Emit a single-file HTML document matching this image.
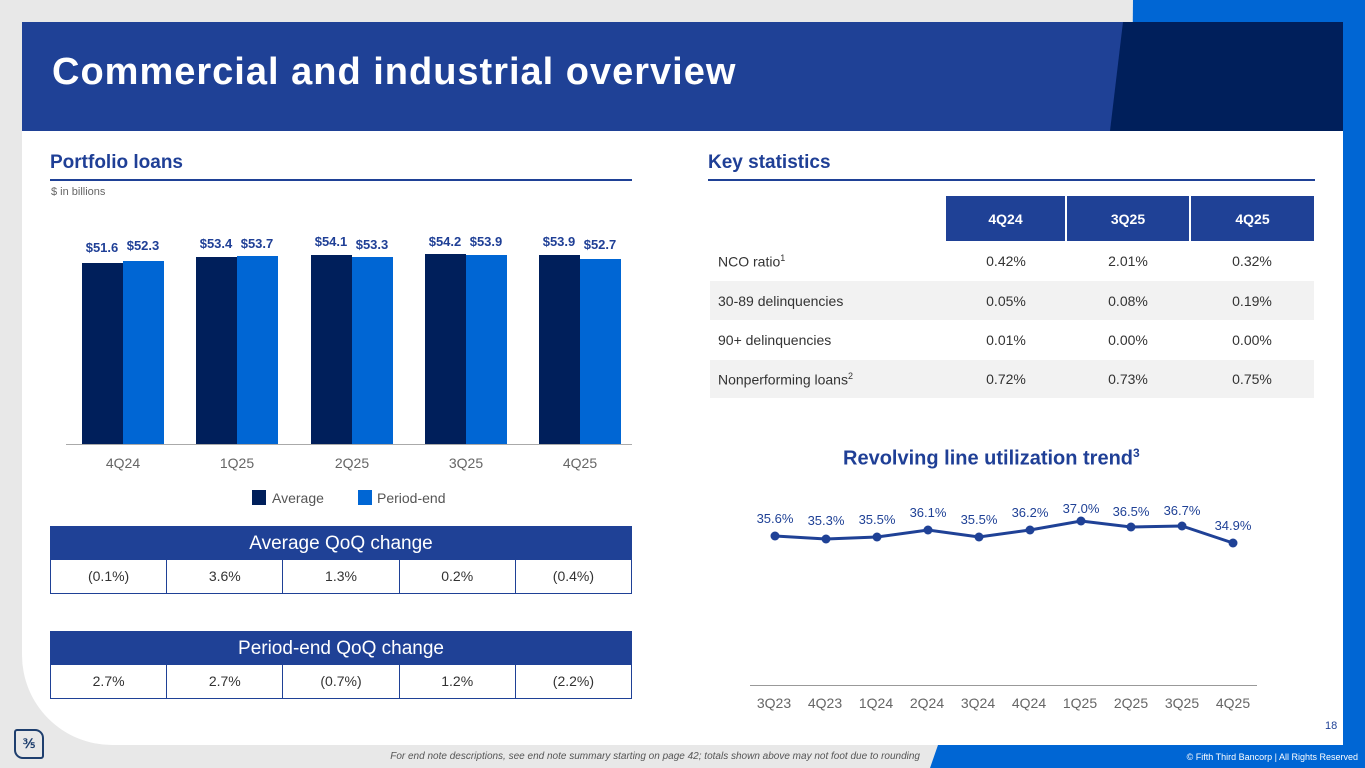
<!DOCTYPE html>
<html><head><meta charset="utf-8"><style>
*{margin:0;padding:0;box-sizing:border-box}
body{width:1365px;height:768px;overflow:hidden;background:#e8e8e8;font-family:"Liberation Sans",sans-serif;position:relative}
.a{position:absolute}
.panel{left:22px;top:22px;width:1321px;height:723px;background:#fff;border-bottom-left-radius:90px}
.h2{color:#1f3f96;font-weight:bold;font-size:19px}
.qt{position:absolute;left:50px;width:582px;border:1px solid #1f4196}
.qt .hd{background:#1f4196;color:#fff;text-align:center;font-size:19px;height:33px;line-height:33px}
.qt .r{display:flex;height:33px;background:#fff}
.qt .r div{flex:1;text-align:center;line-height:33px;font-size:14px;color:#333;border-left:1px solid #1f4196}
.qt .r div:first-child{border-left:none}
table{border-collapse:collapse;font-size:14px;color:#333}
</style></head><body>
<div class="a" style="left:1125px;top:0;width:240px;height:768px;background:#0066d4;clip-path:polygon(8px 0,100% 0,100% 100%,0 100%)"></div>
<div class="a" style="left:930px;top:745px;width:435px;height:23px;background:#0066d4;clip-path:polygon(8px 0,100% 0,100% 100%,0 100%)"></div>
<div class="a panel"></div>
<div class="a" style="left:22px;top:22px;width:1321px;height:109px;background:#1f4196"></div>
<div class="a" style="left:1110px;top:22px;width:233px;height:109px;background:#001f5b;clip-path:polygon(13px 0,100% 0,100% 100%,0 100%)"></div>
<div class="a" style="left:52px;top:51px;color:#fff;font-size:38px;font-weight:bold;letter-spacing:1px">Commercial and industrial overview</div>

<div class="a h2" style="left:50px;top:152px">Portfolio loans</div>
<div class="a" style="left:50px;top:179px;width:582px;height:2px;background:#1f4196"></div>
<div class="a" style="left:51px;top:186px;font-size:11px;color:#666">$ in billions</div>

<svg class="a" style="left:0;top:0" width="700" height="520">
<g font-family="Liberation Sans" font-size="13" fill="#1f3f96" text-anchor="middle" font-weight="bold">
<rect x="82" y="263" width="41" height="181" fill="#001f5b"/><rect x="123" y="261" width="41" height="183" fill="#0066d4"/>
<text x="102" y="252">$51.6</text><text x="143" y="250">$52.3</text>
<rect x="196" y="257" width="41" height="187" fill="#001f5b"/><rect x="237" y="256" width="41" height="188" fill="#0066d4"/>
<text x="216" y="248">$53.4</text><text x="257" y="248">$53.7</text>
<rect x="311" y="255" width="41" height="189" fill="#001f5b"/><rect x="352" y="257" width="41" height="187" fill="#0066d4"/>
<text x="331" y="246">$54.1</text><text x="372" y="249">$53.3</text>
<rect x="425" y="254" width="41" height="190" fill="#001f5b"/><rect x="466" y="255" width="41" height="189" fill="#0066d4"/>
<text x="445" y="246">$54.2</text><text x="486" y="246">$53.9</text>
<rect x="539" y="255" width="41" height="189" fill="#001f5b"/><rect x="580" y="259" width="41" height="185" fill="#0066d4"/>
<text x="559" y="246">$53.9</text><text x="600" y="249">$52.7</text>
</g>
<line x1="66" y1="444.5" x2="632" y2="444.5" stroke="#aaa"/>
<g font-family="Liberation Sans" font-size="14" fill="#666" text-anchor="middle">
<text x="123" y="468">4Q24</text><text x="237" y="468">1Q25</text><text x="352" y="468">2Q25</text><text x="466" y="468">3Q25</text><text x="580" y="468">4Q25</text>
</g>
<rect x="252" y="490" width="14" height="15" fill="#001f5b"/><text x="272" y="503" font-family="Liberation Sans" font-size="14" fill="#555">Average</text>
<rect x="358" y="490" width="14" height="15" fill="#0066d4"/><text x="377" y="503" font-family="Liberation Sans" font-size="14" fill="#555">Period-end</text>
</svg>

<div class="qt" style="top:526px"><div class="hd">Average QoQ change</div><div class="r"><div>(0.1%)</div><div>3.6%</div><div>1.3%</div><div>0.2%</div><div>(0.4%)</div></div></div>
<div class="qt" style="top:631px"><div class="hd">Period-end QoQ change</div><div class="r"><div>2.7%</div><div>2.7%</div><div>(0.7%)</div><div>1.2%</div><div>(2.2%)</div></div></div>

<div class="a h2" style="left:708px;top:152px">Key statistics</div>
<div class="a" style="left:708px;top:179px;width:607px;height:2px;background:#1f4196"></div>
<table class="a" style="left:710px;top:196px;width:604px">
<tr style="height:45px"><td style="width:236px"></td><td style="background:#1f4196;color:#fff;text-align:center;font-weight:bold;width:120px;border-right:2px solid #fff">4Q24</td><td style="background:#1f4196;color:#fff;text-align:center;font-weight:bold;width:124px;border-right:2px solid #fff">3Q25</td><td style="background:#1f4196;color:#fff;text-align:center;font-weight:bold">4Q25</td></tr>
<tr style="height:40px"><td style="padding-left:8px">NCO ratio<sup style="font-size:9px">1</sup></td><td align="center">0.42%</td><td align="center">2.01%</td><td align="center">0.32%</td></tr>
<tr style="height:39px;background:#f2f2f2"><td style="padding-left:8px">30-89 delinquencies</td><td align="center">0.05%</td><td align="center">0.08%</td><td align="center">0.19%</td></tr>
<tr style="height:40px"><td style="padding-left:8px">90+ delinquencies</td><td align="center">0.01%</td><td align="center">0.00%</td><td align="center">0.00%</td></tr>
<tr style="height:38px;background:#f2f2f2"><td style="padding-left:8px">Nonperforming loans<sup style="font-size:9px">2</sup></td><td align="center">0.72%</td><td align="center">0.73%</td><td align="center">0.75%</td></tr>
</table>

<div class="a h2" style="left:843px;top:446px;font-size:20px">Revolving line utilization trend<sup style="font-size:12px">3</sup></div>
<svg class="a" style="left:700px;top:480px" width="620" height="240">
<polyline fill="none" stroke="#1f4196" stroke-width="3" points="75,56 126,59 177,57 228,50 279,57 330,50 381,41 431,47 482,46 533,63"/>
<g fill="#1f4196"><circle cx="75" cy="56" r="4.5"/><circle cx="126" cy="59" r="4.5"/><circle cx="177" cy="57" r="4.5"/><circle cx="228" cy="50" r="4.5"/><circle cx="279" cy="57" r="4.5"/><circle cx="330" cy="50" r="4.5"/><circle cx="381" cy="41" r="4.5"/><circle cx="431" cy="47" r="4.5"/><circle cx="482" cy="46" r="4.5"/><circle cx="533" cy="63" r="4.5"/></g>
<g font-family="Liberation Sans" font-size="13" fill="#1f4196" text-anchor="middle">
<text x="75" y="43">35.6%</text><text x="126" y="45">35.3%</text><text x="177" y="44">35.5%</text><text x="228" y="37">36.1%</text><text x="279" y="44">35.5%</text><text x="330" y="37">36.2%</text><text x="381" y="33">37.0%</text><text x="431" y="36">36.5%</text><text x="482" y="35">36.7%</text><text x="533" y="50">34.9%</text>
</g>
<line x1="50" y1="205.5" x2="557" y2="205.5" stroke="#999"/>
<g font-family="Liberation Sans" font-size="14" fill="#666" text-anchor="middle">
<text x="74" y="228">3Q23</text><text x="125" y="228">4Q23</text><text x="176" y="228">1Q24</text><text x="227" y="228">2Q24</text><text x="278" y="228">3Q24</text><text x="329" y="228">4Q24</text><text x="380" y="228">1Q25</text><text x="431" y="228">2Q25</text><text x="482" y="228">3Q25</text><text x="533" y="228">4Q25</text>
</g>
</svg>

<div class="a" style="left:1325px;top:720px;font-size:11px;color:#1f4196">18</div>
<div class="a" style="left:14px;top:729px;width:30px;height:30px;border:2px solid #1f3f6e;border-radius:3px 9px 3px 9px;color:#1f3f6e;font-weight:bold;font-size:13px;text-align:center;line-height:26px">⅗</div>
<div class="a" style="left:380px;top:751px;font-size:10px;font-style:italic;color:#555;width:540px;text-align:right">For end note descriptions, see end note summary starting on page 42; totals shown above may not foot due to rounding</div>
<div class="a" style="left:1140px;top:752px;font-size:9px;color:#fff;width:218px;text-align:right">© Fifth Third Bancorp | All Rights Reserved</div>
</body></html>
